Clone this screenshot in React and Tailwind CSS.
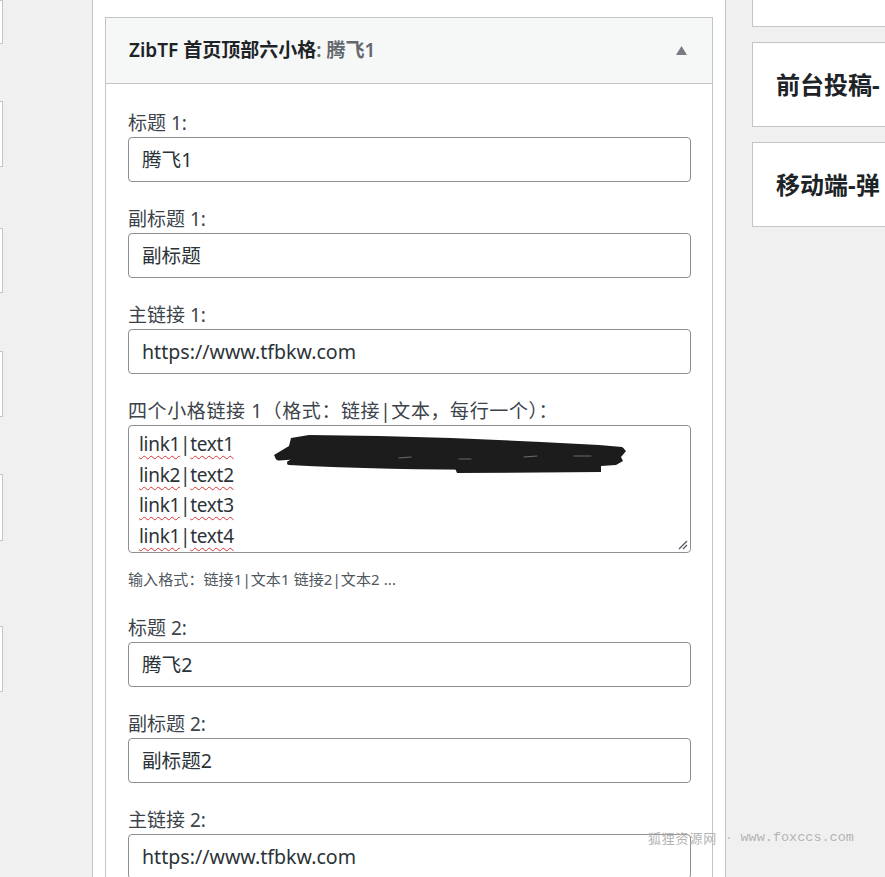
const font = { fontFamily: '"Noto Sans", "Noto Sans CJK SC", sans-serif' };

function Field({ label, value }) {
  return (
    <div className="mb-[25px]">
      <div className="text-[19px] leading-[24px] text-[#3c434a] mb-[2px]">{label}</div>
      <div className="h-[45px] border border-[#8c8f94] rounded-[4px] bg-white px-[13px] flex items-center text-[19.6px] text-[#2c3338]">
        {value}
      </div>
    </div>
  );
}

function Squiggle({ children }) {
  return (
    <span className="underline decoration-wavy decoration-[#d63638] decoration-1 underline-offset-[4px]">
      {children}
    </span>
  );
}

export default function App() {
  const links = [
    ["link1", "text1"],
    ["link2", "text2"],
    ["link1", "text3"],
    ["link1", "text4"],
  ];
  const leftBoxes = [
    "mt-0 h-[44px]",
    "mt-[57px] h-[66px]",
    "mt-[61px] h-[65px]",
    "mt-[58px] h-[66px]",
    "mt-[57px] h-[67px]",
    "mt-[85px] h-[66px]",
  ];

  return (
    <div className="relative w-[885px] h-[877px] overflow-hidden bg-[#f0f0f1] flex" style={font}>
      {/* left column edge */}
      <div className="w-[92px] shrink-0 flex flex-col">
        {leftBoxes.map((c, i) => (
          <div key={i} className={`${c} w-[3px] bg-white border border-l-0 border-[#c3c4c7]`} />
        ))}
      </div>

      {/* middle column */}
      <div className="w-[634px] shrink-0 bg-white border-x border-[#c3c4c7] pl-[12px] pr-[12px] pt-[17px]">
        <div className="border border-[#c3c4c7] bg-white">
          <div className="h-[66px] bg-[#f6f7f7] border-b border-[#c3c4c7] flex items-center justify-between pl-[23px] pr-[25px]">
            <div className="text-[19px] font-semibold text-[#1d2327]">
              ZibTF 首页顶部六小格<span className="text-[#646970]">: 腾飞1</span>
            </div>
            <svg width="11" height="9" viewBox="0 0 11 9">
              <polygon points="5.5,0 11,9 0,9" fill="#787c82" />
            </svg>
          </div>

          <div className="pt-[27px] pl-[22px] pr-[21px]">
            <Field label="标题 1:" value="腾飞1" />
            <Field label="副标题 1:" value="副标题" />
            <Field label="主链接 1:" value="https://www.tfbkw.com" />

            <div className="text-[19px] leading-[24px] text-[#3c434a] mb-[2px] tracking-[0.6px]">
              四个小格链接 1（格式：链接|文本，每行一个）：
            </div>
            <div className="relative h-[128px] border border-[#8c8f94] rounded-[4px] bg-white px-[10px] pt-[3px] text-[19px] leading-[30.7px] text-[#2c3338]">
              {links.map(([a, b], i) => (
                <div key={i} className="tracking-[-0.3px]">
                  <Squiggle>{a}</Squiggle>|<Squiggle>{b}</Squiggle>
                </div>
              ))}
              <svg className="absolute left-0 top-0" width="562" height="128" viewBox="0 0 562 128">
                <path
                  d="M145 29 L160 20 L162 12 L180 9 L250 10 L322 12 L412 16 L470 19 L493 21 L497 25 L492 31 L494 35 L487 39 L472 40 L472 46 L328 47 L326 42 L250 40 L168 39 L158 36 L162 33 L147 33 Z"
                  fill="#1c1c1c"
                />
                <path d="M150 31 Q 260 22 492 25" stroke="#1c1c1c" strokeWidth="7" strokeLinecap="round" fill="none" />
                <path d="M160 37 Q 300 44 470 41" stroke="#1c1c1c" strokeWidth="4" strokeLinecap="round" fill="none" />
                <path d="M270 32 L282 31 M330 33 L342 33 M395 31 L408 30 M445 30 L462 30" stroke="#9aa4ad" strokeWidth="1" strokeLinecap="round" opacity="0.6" />
              </svg>
              <svg className="absolute right-[2px] bottom-[2px]" width="10" height="10" viewBox="0 0 10 10">
                <path d="M1 9 L9 1 M5 9 L9 5" stroke="#50575e" strokeWidth="1.2" />
              </svg>
            </div>
            <div className="text-[15px] leading-[20px] text-[#50575e] mt-[16px] mb-[27px] tracking-[0.1px]">
              输入格式：链接1|文本1 链接2|文本2 ...
            </div>

            <Field label="标题 2:" value="腾飞2" />
            <Field label="副标题 2:" value="副标题2" />
            <Field label="主链接 2:" value="https://www.tfbkw.com" />
          </div>
        </div>
      </div>

      {/* right column */}
      <div className="ml-[26px] flex-1 min-w-0 flex flex-col gap-[15px]">
        <div className="h-[27px] bg-white border border-[#c3c4c7] border-t-0 border-r-0" />
        <div className="h-[85px] bg-white border border-[#c3c4c7] border-r-0 flex items-center pl-[23px] text-[24px] font-bold text-[#1d2327] whitespace-nowrap overflow-hidden">
          前台投稿-
        </div>
        <div className="h-[85px] bg-white border border-[#c3c4c7] border-r-0 flex items-center pl-[23px] text-[24px] font-bold text-[#1d2327] whitespace-nowrap overflow-hidden">
          移动端-弹
        </div>
      </div>

      {/* watermark */}
      <div className="absolute left-[648px] top-[829px] text-[13px] leading-[18px] text-[#b4b4b4] whitespace-nowrap flex items-center">
        <span className="tracking-[0.8px]">狐狸资源网</span>
        <span className="mx-[10px]">·</span>
        <span className="text-[13.5px]" style={{ fontFamily: '"Liberation Mono", monospace' }}>www.foxccs.com</span>
      </div>
    </div>
  );
}
